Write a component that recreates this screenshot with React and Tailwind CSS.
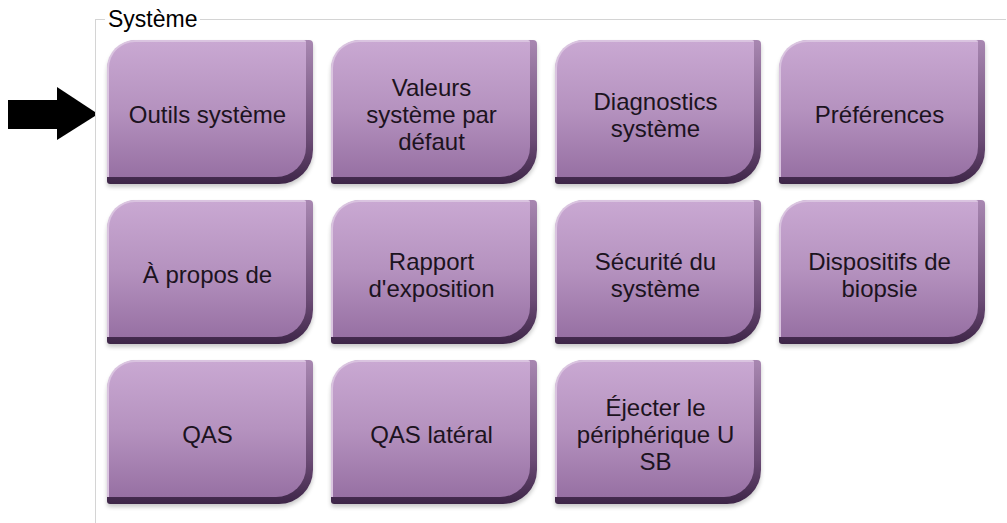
import React from "react";

const buttons = [
  ["Outils système"],
  ["Valeurs", "système par", "défaut"],
  ["Diagnostics", "système"],
  ["Préférences"],
  ["À propos de"],
  ["Rapport", "d'exposition"],
  ["Sécurité du", "système"],
  ["Dispositifs de", "biopsie"],
  ["QAS"],
  ["QAS latéral"],
  ["Éjecter le", "périphérique U", "SB"],
];

function SystemButton({ lines }) {
  return (
    <div className="w-[206px] h-[144px] rounded-tl-[30px] rounded-br-[34px] rounded-tr-[4px] rounded-bl-[3px] bg-[linear-gradient(to_bottom,#a887b1,#6a4a74_70%,#3d2547)] pr-[7px] pb-[7px] shadow-[0_3px_4px_rgba(0,0,0,0.22)]">
      <div className="h-full rounded-tl-[28px] rounded-br-[30px] rounded-tr-[2px] border-t-2 border-l-2 border-[#dac4e0] bg-[linear-gradient(to_bottom,#c9a8d2,#b592bf_50%,#9770a3)] flex items-center justify-center text-center pt-[10px]">
        <span className="text-[24px] leading-[27px] text-[#1c1320]">
          {lines.map((l, i) => (
            <React.Fragment key={i}>
              {i > 0 && <br />}
              {l}
            </React.Fragment>
          ))}
        </span>
      </div>
    </div>
  );
}

export default function App() {
  return (
    <div className="flex w-[1007px] h-[523px] overflow-hidden bg-white font-['Liberation_Sans',Arial,sans-serif]">
      <div className="w-[95px] shrink-0">
        <svg width="95" height="160" viewBox="0 0 95 160">
          <rect x="8" y="100" width="50" height="29" fill="#000" />
          <polygon points="57,87 98,114 57,140" fill="#000" />
        </svg>
      </div>
      <fieldset className="mt-[6px] w-[911px] h-[580px] shrink-0 border border-r-0 border-[#d4d4d4] pl-[11px] pt-[8px]">
        <legend className="-ml-[2px] px-[3px] text-[23px] leading-[26px] text-black">
          Système
        </legend>
        <div className="grid grid-cols-[repeat(4,206px)] gap-x-[18px] gap-y-[16px]">
          {buttons.map((b, i) => (
            <SystemButton key={i} lines={b} />
          ))}
        </div>
      </fieldset>
    </div>
  );
}
